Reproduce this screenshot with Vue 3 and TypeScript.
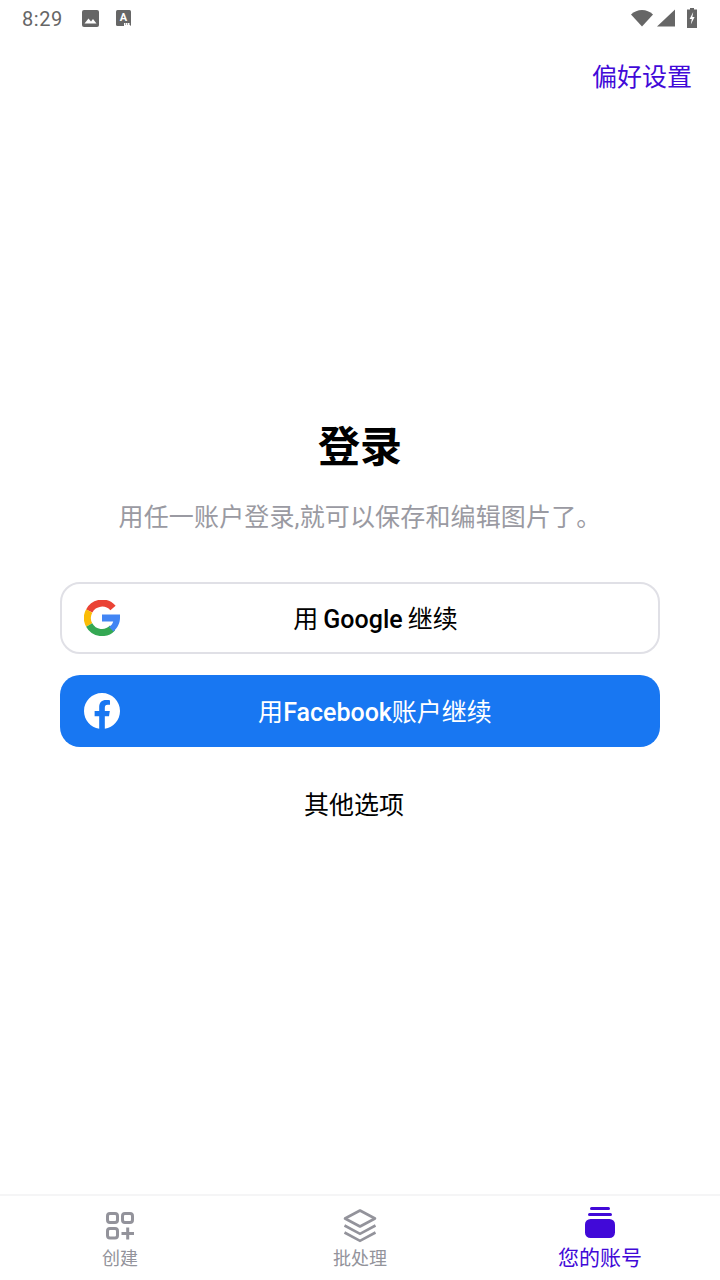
<template>
  <div class="page">
    <div class="status-bar">
      <span class="time">8:29</span>
      <svg class="note-icon" width="17" height="17" viewBox="0 0 17 17">
        <rect x="0" y="0" width="17" height="17" rx="2" fill="#666" />
        <path d="M2.5 13.5 L6.5 8.5 L9 11.5 L11 9 L14.5 13.5 Z" fill="#fff" />
      </svg>
      <svg class="note-icon second" width="15" height="16" viewBox="0 0 15 16">
        <rect x="0" y="0" width="15" height="16" rx="1.5" fill="#666" />
        <text x="7.5" y="10.5" class="tiny-a">A</text>
        <rect x="8" y="13" width="6" height="3" fill="#fff" />
        <path d="M9 14 H10 M11 14 H12 M13 14 H14" stroke="#666" stroke-width="1" />
      </svg>
      <div class="status-right">
        <svg width="22" height="18" viewBox="0 0 22 18">
          <path d="M0 5.5 C6 -0.6 16 -0.6 22 5.5 L11 17.5 Z" fill="#666" />
        </svg>
        <svg class="signal" width="18" height="18" viewBox="0 0 18 18">
          <path d="M18 0.5 V17.5 H0 Z" fill="#666" />
        </svg>
        <svg class="battery" width="10" height="20" viewBox="0 0 10 20">
          <path d="M3 0 H7 V1.6 H10 V20 H0 V1.6 H3 Z" fill="#666" />
          <path d="M6.2 4 L2.6 11 H4.8 L3.8 16.5 L7.6 9 H5.4 Z" fill="#fff" />
        </svg>
      </div>
    </div>

    <div class="top-link">
      <span>偏好设置</span>
    </div>

    <main class="content">
      <h1>登录</h1>
      <p class="subtitle">用任一账户登录,就可以保存和编辑图片了。</p>

      <button class="login-btn google">
        <svg class="btn-icon" width="36" height="36" viewBox="0 0 36 36">
          <path d="M29 8 A14.5 14.5 0 0 0 5.2 11" fill="none" stroke="#ea4335" stroke-width="7" />
          <path d="M5.2 11 A14.5 14.5 0 0 0 5.2 25" fill="none" stroke="#fbbc05" stroke-width="7" />
          <path d="M5.2 25 A14.5 14.5 0 0 0 28.5 28" fill="none" stroke="#34a853" stroke-width="7" />
          <path d="M18 14.5 H36 V18 C36 23 33.5 28 29.5 31.5 L25 27 C27.5 25.5 28.6 23.4 29.2 21.5 H18 Z" fill="#4285f4" />
        </svg>
        <span class="btn-label google-label">用 <b>Google</b> 继续</span>
      </button>

      <button class="login-btn facebook">
        <svg class="btn-icon" width="36" height="36" viewBox="0 0 36 36">
          <path fill="#fff" d="M36 18C36 8.06 27.94 0 18 0S0 8.06 0 18c0 8.98 6.58 16.43 15.19 17.78V23.2h-4.57V18h4.57v-3.96c0-4.51 2.69-7 6.8-7 1.97 0 4.03.35 4.03.35v4.43h-2.27c-2.24 0-2.93 1.39-2.93 2.81V18h4.99l-.8 5.2h-4.19v12.58C29.42 34.43 36 26.98 36 18z" />
        </svg>
        <span class="btn-label">用<b>Facebook</b>账户继续</span>
      </button>

      <div class="other">其他选项</div>
    </main>

    <nav class="tab-bar">
      <div v-for="tab in tabs" :key="tab.label" class="tab" :class="{ active: tab.active }">
        <div class="tab-icon">
          <svg v-if="tab.icon === 'create'" width="28" height="28" viewBox="0 0 28 28" fill="none" stroke="#93939b" stroke-width="3">
            <rect x="1.5" y="1.5" width="10" height="9" rx="2.5" />
            <rect x="16.5" y="1.5" width="10" height="9" rx="2.5" />
            <rect x="1.5" y="16.5" width="10" height="9.5" rx="2.5" />
            <path d="M15.5 21.5 H28 M21.7 15.5 V27.5" />
          </svg>
          <svg v-else-if="tab.icon === 'layers'" width="34" height="34" viewBox="0 0 34 34" fill="none" stroke="#93939b" stroke-width="2.6">
            <path d="M17 1.5 L32 9.5 L17 17.5 L2 9.5 Z" stroke-linejoin="round" />
            <path d="M1.5 16.5 L17 24.8 L32.5 16.5" />
            <path d="M1.5 23.5 L17 31.8 L32.5 23.5" />
          </svg>
          <svg v-else class="account" width="30" height="31" viewBox="0 0 30 31" fill="#4109d8">
            <rect x="5" y="0" width="20" height="3" rx="1.5" />
            <rect x="3" y="6" width="24" height="3" rx="1.5" />
            <rect x="0" y="12" width="30" height="19" rx="5.5" />
          </svg>
        </div>
        <span class="tab-label">{{ tab.label }}</span>
      </div>
    </nav>
  </div>
</template>

<script setup lang="ts">
interface Tab {
  label: string
  icon: string
  active?: boolean
}

const tabs: Tab[] = [
  { label: '创建', icon: 'create' },
  { label: '批处理', icon: 'layers' },
  { label: '您的账号', icon: 'account', active: true },
]
</script>

<style>
html,
body {
  margin: 0;
  background: #fff;
}
</style>

<style scoped>
.page {
  width: 720px;
  height: 1280px;
  display: flex;
  flex-direction: column;
  background: #fff;
  font-family: Roboto, "Noto Sans CJK SC", sans-serif;
  overflow: hidden;
}

.status-bar {
  height: 36px;
  display: flex;
  align-items: center;
  padding: 0 23px 0 22px;
  box-sizing: border-box;
  color: #666;
}

.time {
  font-size: 20px;
  letter-spacing: 0.6px;
  width: 60px;
  padding-top: 2px;
}

.note-icon.second {
  margin-left: 17px;
}

.tiny-a {
  font: bold 11px Roboto, sans-serif;
  fill: #fff;
  text-anchor: middle;
}

.status-right {
  margin-left: auto;
  display: flex;
  align-items: center;
}

.signal {
  margin-left: 4px;
}

.battery {
  margin-left: 12px;
}

.top-link {
  display: flex;
  justify-content: flex-end;
  padding: 24px 28px 0 0;
  height: 60px;
  box-sizing: border-box;
  font-size: 25px;
  line-height: 36px;
  color: #4109d8;
}

.content {
  flex: 1;
  display: flex;
  flex-direction: column;
  align-items: center;
  padding: 0 60px;
  box-sizing: border-box;
}

h1 {
  margin: 322px 0 0;
  font-size: 42px;
  line-height: 60px;
  font-weight: 700;
  color: #000;
}

.subtitle {
  margin: 21px 0 0;
  font-size: 25px;
  letter-spacing: 0.15px;
  line-height: 38px;
  color: #9a9aa2;
}

.login-btn {
  width: 600px;
  height: 72px;
  flex: none;
  border-radius: 20px;
  display: flex;
  align-items: center;
  box-sizing: border-box;
  font-family: inherit;
  font-size: 25px;
}

.login-btn b {
  font-weight: 500;
}

.btn-icon {
  flex: none;
}

.btn-label {
  flex: 1;
  text-align: center;
  padding: 0 6px 2px 0;
}

.google-label {
  word-spacing: -1px;
  padding-left: 1px;
}

.google {
  margin-top: 45px;
  padding: 0 22px;
  background: #fff;
  border: 2px solid #e0e0e6;
  color: #000;
}

.facebook {
  margin-top: 21px;
  padding: 0 24px;
  background: #1877f2;
  border: none;
  color: #fff;
}

.other {
  margin-top: 41px;
  margin-right: 12px;
  font-size: 25px;
  line-height: 36px;
  color: #000;
}

.tab-bar {
  height: 86px;
  display: flex;
  border-top: 2px solid #f5f5f6;
  box-sizing: border-box;
  flex: none;
}

.tab {
  flex: 1;
  display: flex;
  flex-direction: column;
  align-items: center;
  padding-top: 12px;
  color: #93939b;
}

.tab-icon {
  height: 36px;
  display: flex;
  align-items: center;
  justify-content: center;
}

.account {
  margin-bottom: 7px;
}

.tab-label {
  font-size: 18px;
  line-height: 28px;
  margin-top: 1px;
}

.tab.active {
  color: #4109d8;
}

.tab.active .tab-label {
  font-size: 21px;
  margin-top: 0;
}
</style>
